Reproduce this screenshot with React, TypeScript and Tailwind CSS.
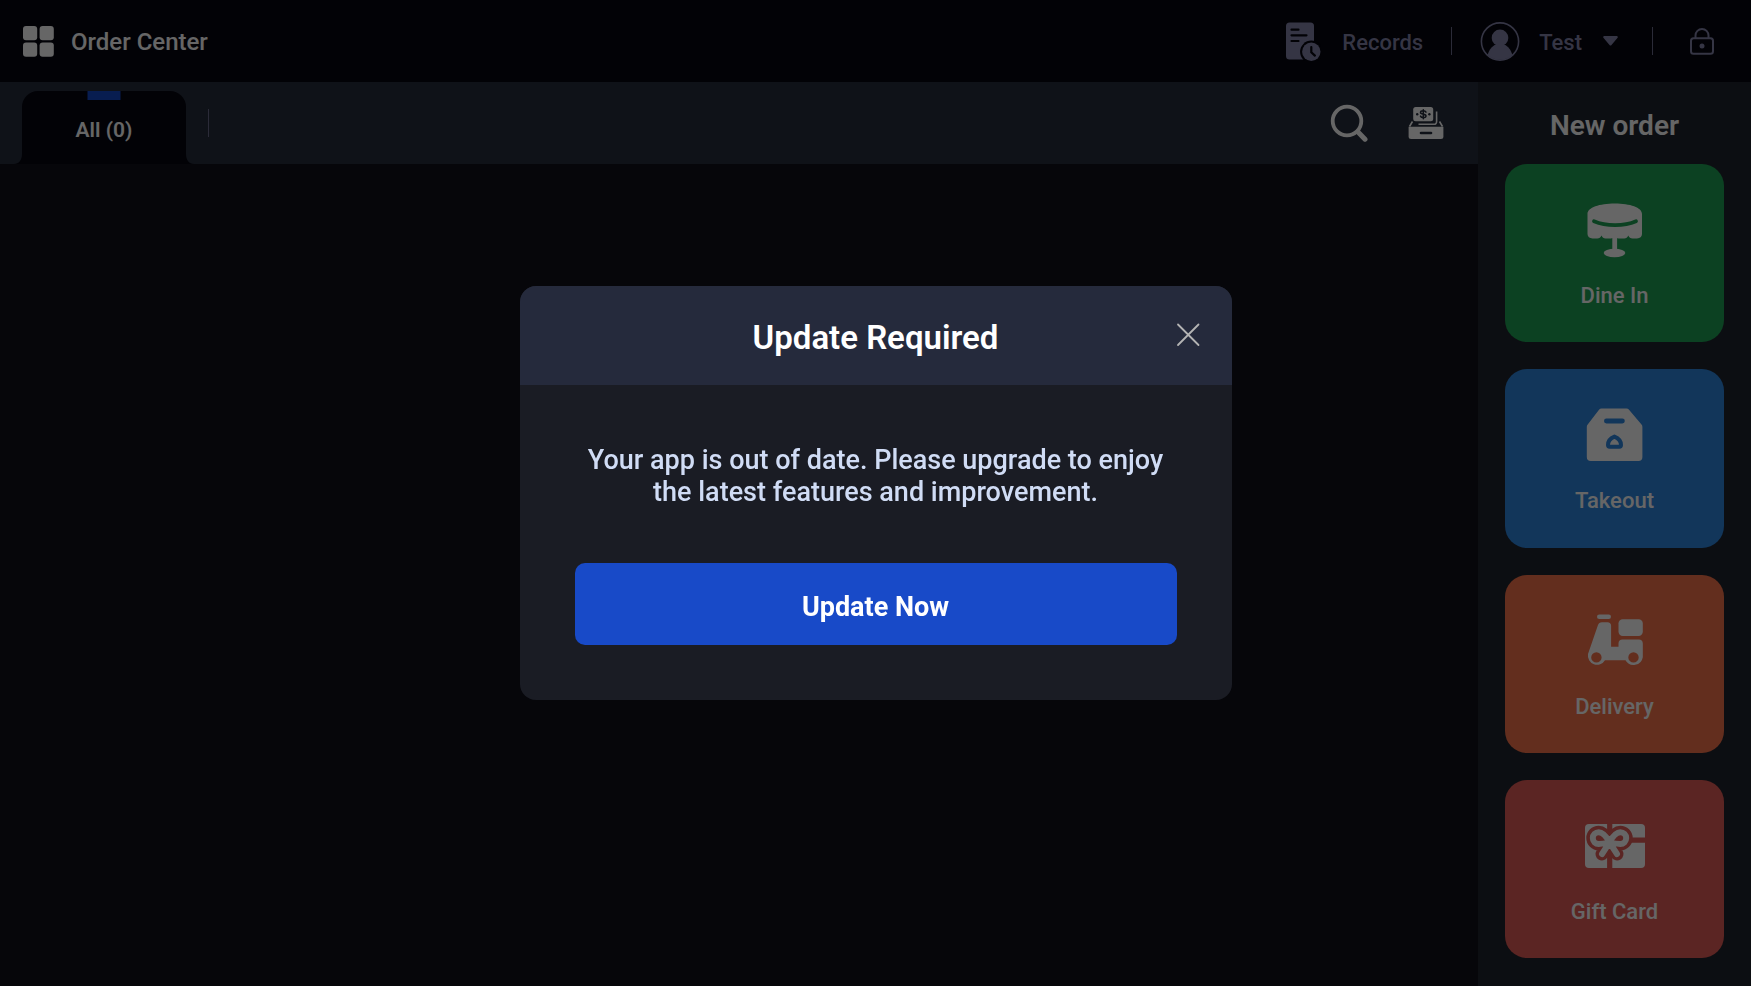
import type { ReactNode } from 'react'

// "New order" entries shown in the right column
const orderTypes: { name: string; color: string; icon: ReactNode }[] = [
  { name: 'Dine In', color: 'bg-[#1ea355]', icon: <DineInIcon /> },
  { name: 'Takeout', color: 'bg-[#2d87e1]', icon: <TakeoutIcon /> },
  { name: 'Delivery', color: 'bg-[#f7734b]', icon: <DeliveryIcon /> },
  { name: 'Gift Card', color: 'bg-[#e35c57]', icon: <GiftCardIcon /> },
]

function GridIcon() {
  return (
    <svg width="31" height="31" viewBox="0 0 31 31" fill="currentColor">
      <rect x="0" y="0" width="14.2" height="14.2" rx="3" />
      <rect x="16.6" y="0" width="14.2" height="14.2" rx="3" />
      <rect x="0" y="16.6" width="14.2" height="14.2" rx="3" />
      <rect x="16.6" y="16.6" width="14.2" height="14.2" rx="3" />
    </svg>
  )
}

function RecordsIcon() {
  return (
    <svg width="36" height="40" viewBox="0 0 36 40">
      <rect x="1" y="1.500" width="28" height="37" rx="3.500" fill="currentColor" />
      <path d="M6.500 8.700h7M6.500 14.300h15M6.500 20h7" stroke="#05050f" strokeWidth="2.200" strokeLinecap="round" />
      <circle cx="26.300" cy="30.800" r="11.200" fill="#05050f" />
      <circle cx="26.300" cy="30.800" r="9.200" fill="currentColor" />
      <path d="M26.300 26v5.200l3.600 3.400" fill="none" stroke="#05050f" strokeWidth="2.200" strokeLinecap="round" />
    </svg>
  )
}

function UserIcon() {
  return (
    <svg width="40" height="40" viewBox="0 0 40 40">
      <circle cx="20" cy="20.500" r="18.600" fill="none" stroke="currentColor" strokeWidth="1.600" />
      <circle cx="20" cy="16.900" r="8.300" fill="currentColor" />
      <path d="M7.600 34C9 29 12 25 15.500 23.800h9c3.500 1.200 6.500 5.200 7.900 10.200A18.600 18.600 0 0 1 7.600 34Z" fill="currentColor" />
    </svg>
  )
}

function LockIcon() {
  return (
    <svg width="26" height="28" viewBox="0 0 26 28" fill="none" stroke="currentColor" strokeWidth="2">
      <rect x="2" y="11.300" width="22" height="15.400" rx="2.500" />
      <path d="M6.500 11V8.500a6.500 6.500 0 0 1 13 0V11" />
      <circle cx="13" cy="19.100" r="2.500" fill="currentColor" stroke="none" />
    </svg>
  )
}

function SearchIcon() {
  return (
    <svg width="38" height="38" viewBox="0 0 38 38" fill="none" stroke="currentColor">
      <circle cx="17" cy="17" r="14.300" strokeWidth="3.800" />
      <path d="M28 28l7 7.200" strokeWidth="5" strokeLinecap="round" />
    </svg>
  )
}

function DrawerIcon() {
  return (
    <svg width="36" height="34" viewBox="0 0 36 34">
      <path d="M28.600 5.500v10.300a2.500 2.500 0 0 1-2.500 2.500H10.500" fill="none" stroke="currentColor" strokeWidth="1.600" />
      <rect x="5.200" y="1" width="20" height="14.300" rx="2.500" fill="currentColor" />
      <g fill="none" stroke="#262d3c" strokeWidth="1.500" strokeLinecap="round">
        <path d="M18 6.200c-.5-1-1.500-1.400-2.700-1.400-1.600 0-2.800.6-2.800 1.700 0 2.600 5.500.7 5.500 3.400 0 1.100-1.200 1.700-2.800 1.700-1.200 0-2.300-.5-2.700-1.500M15.300 3.700v9" />
      </g>
      <circle cx="9.200" cy="8.200" r="1.200" fill="#262d3c" />
      <circle cx="21.400" cy="8.200" r="1.200" fill="#262d3c" />
      <path d="M4.500 15.500L1.500 20.500M31.500 15.500l3 5" stroke="currentColor" strokeWidth="1.600" />
      <path d="M.6 20.800h34.800V30.500a2.500 2.500 0 0 1-2.500 2.500H3.100a2.500 2.500 0 0 1-2.500-2.500Z" fill="currentColor" />
      <path d="M13 27h10" stroke="#262d3c" strokeWidth="2.600" strokeLinecap="round" />
    </svg>
  )
}

function DineInIcon() {
  return (
    <svg width="60" height="56" viewBox="0 0 60 56" fill="currentColor">
      <path d="M2.500 12C2.500 5.500 14.500 1.500 29.800 1.500S57 5.500 57 12v20c0 2.500-2 4.400-5 4.400h-4.500c-2 0-3.400-1-4.200-3-.8 2-2.200 3-4 3h-5.600c-1.800 0-3.200-.7-4-2-.8 1.300-2.200 2-4 2h-5.200c-1.800 0-3.200-1-4-3-.8 2-2.300 3-4.200 3H7.500c-3 0-5-1.900-5-4.400Z" />
      <path d="M9 19.200c12 5.200 30.200 5.200 42 0" fill="none" stroke="#1ea355" strokeWidth="3.800" strokeLinecap="round" />
      <rect x="27.300" y="34" width="4.800" height="15" />
      <ellipse cx="29.500" cy="51" rx="10.800" ry="4.200" />
    </svg>
  )
}

function TakeoutIcon() {
  return (
    <svg width="60" height="56" viewBox="0 0 60 56" fill="currentColor">
      <path d="M16.500 1.500h25c1 0 1.700.3 2.300 1L56.500 17.500c.6.7.9 1.400.9 2.400V50a4 4 0 0 1-4 4H5.800a4 4 0 0 1-4-4V19.900c0-1 .3-1.700.9-2.400L14.200 2.500c.6-.7 1.300-1 2.300-1Z" />
      <path d="M21.400 14h16" stroke="#2d87e1" strokeWidth="4.800" strokeLinecap="round" />
      <path d="M29.400 29.600c-3.800 1.500-6.400 4.300-6.400 8.400 0 1.200.6 1.700 1.600 1.700h9.800c1 0 1.600-.5 1.600-1.700 0-4.100-2.800-6.900-6.600-8.400Z" fill="none" stroke="#2d87e1" strokeWidth="4" strokeLinejoin="round" />
    </svg>
  )
}

function DeliveryIcon() {
  return (
    <svg width="60" height="56" viewBox="0 0 60 56" fill="currentColor">
      <rect x="12" y="1.500" width="14" height="4.600" rx="2.300" />
      <rect x="33.500" y="6.300" width="24.300" height="16.600" rx="4.200" />
      <path
        fillRule="evenodd"
        d="M17 9.200h5.500c2.200 0 3.600 1.400 3.600 3.600V33.700h7.400v-3.300c0-2.500 1.500-4 4-4h16.300c2.500 0 4 1.500 4 4V44.200a9.300 9.300 0 0 1-17.300 3h-20.500a9.200 9.200 0 0 1-17-6.200L12.900 12.200c.6-2 2-3 4.100-3ZM11.400 39.200a5.200 5.200 0 1 0 0 10.400 5.200 5.200 0 1 0 0-10.400ZM48.500 39.200a5.200 5.200 0 1 0 0 10.400 5.200 5.200 0 1 0 0-10.400Z"
      />
    </svg>
  )
}

function GiftCardIcon() {
  // bow outline is drawn twice: a wide cut-out first, then the ribbon itself
  const bow = 'M24.500 24C21 18 17.500 14.200 13.700 14.200a5.900 5.900 0 0 0 0 11.800c4 0 7.500-1 10.800-2 3.300 1 6.800 2 10.800 2a5.900 5.900 0 0 0 0-11.800c-3.800 0-7.300 3.800-10.800 9.800ZM24.500 24.500L17 36M24.500 24.500l7.500 11.500'
  return (
    <svg width="60" height="56" viewBox="0 0 60 56">
      <rect x="0" y="6" width="60" height="44" rx="4" fill="currentColor" />
      <path d="M24.700 4v48M24 22.200h37" stroke="#e35c57" strokeWidth="5.200" />
      <g fill="none" strokeLinecap="round" strokeLinejoin="round">
        <path d={bow} stroke="#e35c57" strokeWidth="13" />
        <path d={bow} stroke="currentColor" strokeWidth="6" />
      </g>
    </svg>
  )
}

function Header() {
  return (
    <header className="flex h-[82px] shrink-0 items-center justify-between bg-[#05050f] pr-9 pl-[23px]">
      <div className="flex items-center gap-[17px] text-white">
        <GridIcon />
        <h1 className="pt-0.5 text-2xl font-medium">Order Center</h1>
      </div>
      <div className="flex items-center text-[#8484aa]">
        <button className="flex items-center gap-[21px] text-[22px] font-medium">
          <RecordsIcon />
          <span className="pt-0.5">Records</span>
        </button>
        <span className="mx-7 h-7 w-px bg-[#6b6b8c]" />
        <button className="flex items-center gap-[19px] text-[22px] font-medium">
          <UserIcon />
          <span className="pt-0.5">Test</span>
          <svg className="ml-0.5" width="15" height="10" viewBox="0 0 15 10" fill="currentColor">
            <path d="M1.500 0h12c1.200 0 1.700 1.200.9 2L8.500 9c-.6.700-1.400.700-2 0L.6 2C-.2 1.200.3 0 1.500 0Z" />
          </svg>
        </button>
        <span className="mr-9 ml-[34px] h-7 w-px bg-[#6b6b8c]" />
        <button aria-label="Lock">
          <LockIcon />
        </button>
      </div>
    </header>
  )
}

function TabBar() {
  return (
    <div className="flex h-[82px] shrink-0 items-end justify-between bg-[#262d3c] pr-[34px] pl-[22px]">
      <div className="flex items-end">
        <button className="relative flex h-[73px] w-[164px] items-center justify-center rounded-t-2xl bg-[#05050f] pt-1.5 text-[21px] font-semibold text-white">
          <span className="absolute top-0 left-1/2 h-[9px] w-[33px] -translate-x-1/2 bg-[#1649c8]" />
          All (0)
          {/* flared feet of the active tab */}
          <svg className="absolute bottom-0 -left-2" width="8" height="10" viewBox="0 0 8 10" fill="#05050f">
            <path d="M8 0v10H0c5 0 8-4 8-10Z" />
          </svg>
          <svg className="absolute -right-2 bottom-0" width="8" height="10" viewBox="0 0 8 10" fill="#05050f">
            <path d="M0 0v10h8C3 10 0 6 0 0Z" />
          </svg>
        </button>
        <span className="mb-[27px] ml-[22px] h-7 w-px bg-[#6b6b8c]" />
      </div>
      <div className="flex h-full items-center gap-10 text-white">
        <button aria-label="Search">
          <SearchIcon />
        </button>
        <button aria-label="Cash drawer">
          <DrawerIcon />
        </button>
      </div>
    </div>
  )
}

function NewOrder() {
  return (
    <aside className="flex w-[273px] shrink-0 flex-col bg-[#20232d] px-[27px] pb-7 text-white">
      <h2 className="flex h-[82px] shrink-0 items-center justify-center pt-1.5 text-[28px] font-semibold">New order</h2>
      <div className="flex flex-1 flex-col gap-[27px]">
        {orderTypes.map((type) => (
          <button
            key={type.name}
            className={`flex flex-1 flex-col items-center justify-start gap-[25px] rounded-[22px] pt-[38px] text-[22px] leading-[26px] font-medium ${type.color}`}
          >
            {type.icon}
            {type.name}
          </button>
        ))}
      </div>
    </aside>
  )
}

function UpdateDialog() {
  return (
    <div className="fixed inset-0 flex items-center justify-center bg-black/60">
      <div role="dialog" aria-labelledby="update-title" className="w-[712px] overflow-hidden rounded-2xl bg-[#1a1c24]">
        <div className="relative flex h-[99px] items-center justify-center bg-[#252a3c] pt-1">
          <h2 id="update-title" className="text-[33px] font-semibold text-white">
            Update Required
          </h2>
          <button aria-label="Close" className="absolute top-[37px] right-8 text-[#b4b4b4]">
            <svg width="24" height="24" viewBox="0 0 24 24" stroke="currentColor" strokeWidth="1.800" strokeLinecap="round">
              <path d="M2 1.500l20.500 20.500M22.500 1.500L2 22" />
            </svg>
          </button>
        </div>
        <div className="px-[55px] pt-[59px] pb-[55px] text-center text-[27px]">
          <p className="mb-[55px] leading-8 font-medium text-[#d0dcf5]">
            Your app is out of date. Please upgrade to enjoy the latest features and improvement.
          </p>
          <button className="flex h-[82px] w-full items-center justify-center rounded-[10px] bg-[#184ac8] pt-1.5 font-bold text-white">
            Update Now
          </button>
        </div>
      </div>
    </div>
  )
}

export default function App() {
  return (
    <div className="flex min-h-screen flex-col bg-[#0f0f19] font-['Roboto',sans-serif]">
      <Header />
      <div className="flex flex-1">
        <main className="flex flex-1 flex-col">
          <TabBar />
        </main>
        <NewOrder />
      </div>
      <UpdateDialog />
    </div>
  )
}
